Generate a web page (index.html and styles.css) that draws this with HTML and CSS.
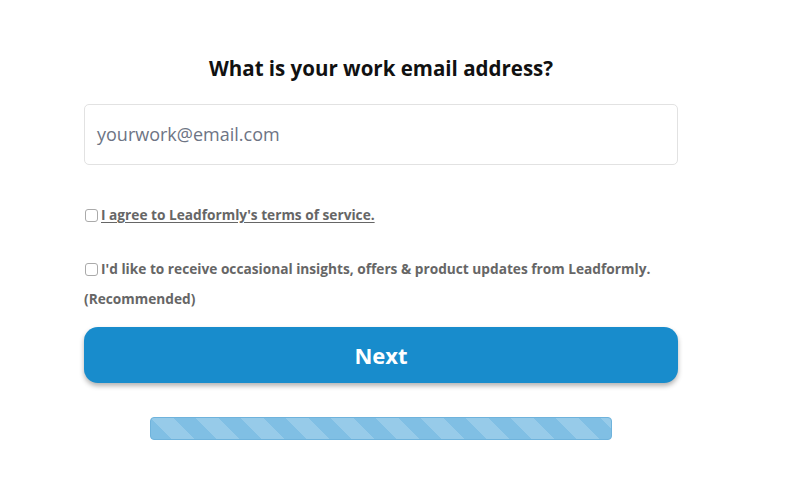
FILE: index.html
```html
<!DOCTYPE html>
<html>
<head>
<meta charset="utf-8">
<link rel="stylesheet" href="styles.css">
</head>
<body>
<div class="form">
  <h1 class="title">What is your work email address?</h1>
  <div class="input">yourwork@email.com</div>
  <label class="check first"><span class="box"></span><span class="terms">I agree to Leadformly's terms of service.</span></label>
  <label class="check second"><span class="box"></span><span>I'd like to receive occasional insights, offers &amp; product updates from Leadformly.</span></label>
  <div class="rec">(Recommended)</div>
  <div class="btn">Next</div>
  <div class="progress-wrap"><div class="progress"></div></div>
</div>
</body>
</html>
```
FILE: styles.css
```css
html, body { margin: 0; padding: 0; background: #fff; }
body { font-family: "Open Sans", sans-serif; }
.form { width: 594px; margin-left: 84px; padding-top: 54px; display: flex; flex-direction: column; }
.title { margin: 0; font-size: 20.5px; font-weight: 700; color: #111; text-align: center; line-height: 28px; }
.input { margin-top: 22px; height: 59px; border: 1px solid #e2e2e2; border-radius: 5px; box-sizing: content-box; padding-left: 12px; font-size: 18px; color: #6d7484; line-height: 59px; }
.check { display: flex; align-items: center; font-size: 13.7px; font-weight: 700; color: #666; line-height: 18px; }
.check.first { margin-top: 41px; }
.check.second { margin-top: 36px; }
.box { width: 11px; height: 11px; border: 1px solid #aaa; border-radius: 3px; margin-left: 1px; margin-right: 3px; flex: none; }
.terms { text-decoration: underline; text-underline-offset: 2px; }
.rec { margin-top: 12px; font-size: 13.7px; font-weight: 700; color: #666; line-height: 18px; }
.btn { margin-top: 19px; height: 56px; border-radius: 14px; background: #188ccc; color: #fff; font-size: 22px; font-weight: 700; text-align: center; line-height: 56px; box-shadow: 0 3px 5px rgba(0,0,0,0.3); }
.progress-wrap { margin-top: 34px; padding-left: 66px; padding-right: 66px; }
.progress { height: 21px; border: 1px solid #6fb3dc; border-radius: 4px; background-color: #80bfe4; background-image: linear-gradient(45deg, rgba(255,255,255,0.18) 25%, transparent 25%, transparent 50%, rgba(255,255,255,0.18) 50%, rgba(255,255,255,0.18) 75%, transparent 75%, transparent); background-size: 45px 45px; }
```
